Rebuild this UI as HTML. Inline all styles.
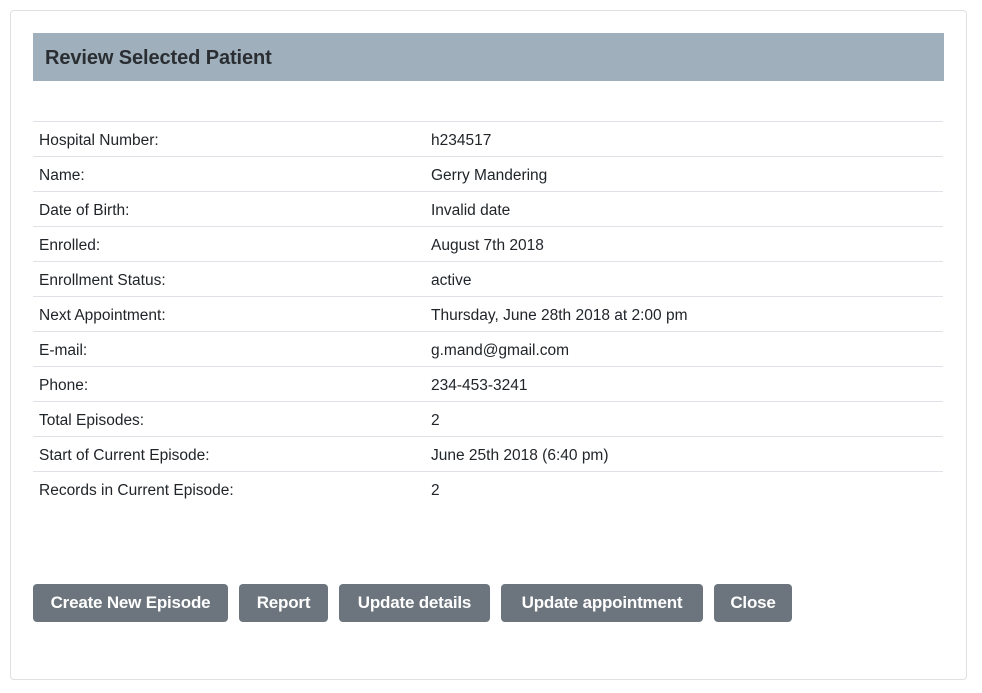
<!DOCTYPE html>
<html><head><style>
body{margin:0;background:#fff;font-family:"Liberation Sans",sans-serif;color:#212529;}
.card{position:absolute;left:10px;top:10px;width:955px;height:668px;border:1px solid #e0e0e0;border-radius:4px;}
.hdr{position:absolute;left:33px;top:33px;width:911px;height:48px;background:#9fb0bc;}
.hdr span{position:absolute;left:12px;top:14px;font-size:20px;font-weight:bold;color:#2a2e33;letter-spacing:-0.1px}
.row{position:absolute;left:33px;width:910px;height:35px;border-top:1px solid #dee2e6;font-size:15.5px;}
.row .l{position:absolute;left:6px;top:10px}
.row .v{position:absolute;left:398px;top:10px}
.btn{position:absolute;top:584px;height:38px;background:#6c757d;color:#fff;border-radius:4px;font-weight:bold;font-size:17px;line-height:38px;text-align:center;letter-spacing:-0.2px}
</style></head><body>
<div class="card"></div>
<div class="hdr"><span>Review Selected Patient</span></div>
<div class="row" style="top:121px"><span class="l">Hospital Number:</span><span class="v">h234517</span></div>
<div class="row" style="top:156px"><span class="l">Name:</span><span class="v">Gerry Mandering</span></div>
<div class="row" style="top:191px"><span class="l">Date of Birth:</span><span class="v">Invalid date</span></div>
<div class="row" style="top:226px"><span class="l">Enrolled:</span><span class="v">August 7th 2018</span></div>
<div class="row" style="top:261px"><span class="l">Enrollment Status:</span><span class="v">active</span></div>
<div class="row" style="top:296px"><span class="l">Next Appointment:</span><span class="v">Thursday, June 28th 2018 at 2:00 pm</span></div>
<div class="row" style="top:331px"><span class="l">E-mail:</span><span class="v">g.mand@gmail.com</span></div>
<div class="row" style="top:366px"><span class="l">Phone:</span><span class="v">234-453-3241</span></div>
<div class="row" style="top:401px"><span class="l">Total Episodes:</span><span class="v">2</span></div>
<div class="row" style="top:436px"><span class="l">Start of Current Episode:</span><span class="v">June 25th 2018 (6:40 pm)</span></div>
<div class="row" style="top:471px"><span class="l">Records in Current Episode:</span><span class="v">2</span></div>
<div class="btn" style="left:33px;width:195px">Create New Episode</div>
<div class="btn" style="left:239px;width:89px">Report</div>
<div class="btn" style="left:339px;width:151px">Update details</div>
<div class="btn" style="left:501px;width:202px">Update appointment</div>
<div class="btn" style="left:714px;width:78px">Close</div>
</body></html>
